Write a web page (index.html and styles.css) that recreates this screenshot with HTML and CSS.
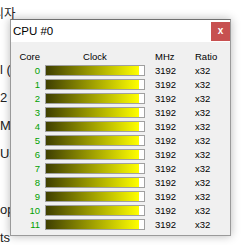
FILE: index.html
```html
<!DOCTYPE html>
<html lang="ko">
<head>
  <meta charset="UTF-8">
  <title>CPU #0</title>
  <link rel="stylesheet" href="styles.css">
</head>
<body>

<div class="desktop">
  <div class="line shift-kr">관리자</div>
  <div class="line"></div>
  <div class="line">l (2)</div>
  <div class="line">2 ;</div>
  <div class="line">M</div>
  <div class="line">Us</div>
  <div class="line"></div>
  <div class="line">op</div>
  <div class="line">ts</div>
</div>

<div class="window">
  <div class="titlebar">
    <span class="title">CPU #0</span>
    <span class="close">x</span>
  </div>
  <div class="grid" id="grid">
    <div class="hd core">Core</div>
    <div class="hd clock">Clock</div>
    <div class="hd">MHz</div>
    <div class="hd">Ratio</div>
  </div>
</div>

<script>
  const grid = document.getElementById('grid');
  for (let i = 0; i < 12; i++) {
    grid.insertAdjacentHTML('beforeend',
      '<div class="core num">' + i + '</div>' +
      '<div class="bar"><div class="fill" style="width:95%"></div></div>' +
      '<div>3192</div>' +
      '<div>x32</div>');
  }
</script>
</body>
</html>
```

FILE: styles.css
```css
body { margin: 0; background: #fff; font-family: "Liberation Sans", "Noto Sans CJK KR", sans-serif; }
.desktop { color: #222; font-size: 13px; }
.line { height: 28px; line-height: 28px; white-space: nowrap; }
.shift-kr { margin-left: -19px; font-size: 12.5px; }

.window { position: absolute; left: 10px; top: 19px; width: 221px; height: 217px; box-sizing: border-box;
  border: 1px solid #9a9a9a; border-top-color: #707070; background: #f0f0f0;
  box-shadow: 0 0 9px rgba(0,0,0,0.28); }
.titlebar { height: 22px; background: #fff; display: flex; justify-content: space-between; align-items: flex-start; }
.title { font-size: 11.5px; padding: 5px 0 0 2px; color: #000; }
.close { width: 19px; height: 19px; margin-top: 2px; background: #c75050; color: #fff;
  font-size: 10px; font-weight: bold; text-align: center; line-height: 18px; }

.grid { display: grid; grid-template-columns: 34px 110px 40px 1fr; grid-auto-rows: 14px;
  padding-top: 7px; font-size: 9.5px; align-items: center; color: #000; }
.core { text-align: right; padding-right: 5px; }
.clock { width: 100px; text-align: center; }
.num { color: #00a000; }
.bar { width: 100px; height: 11px; box-sizing: border-box; border: 1px solid #a0a0a0; background: #fff; }
.fill { height: 100%; background: linear-gradient(to right, #3f3f00, #ffff00); }
```
